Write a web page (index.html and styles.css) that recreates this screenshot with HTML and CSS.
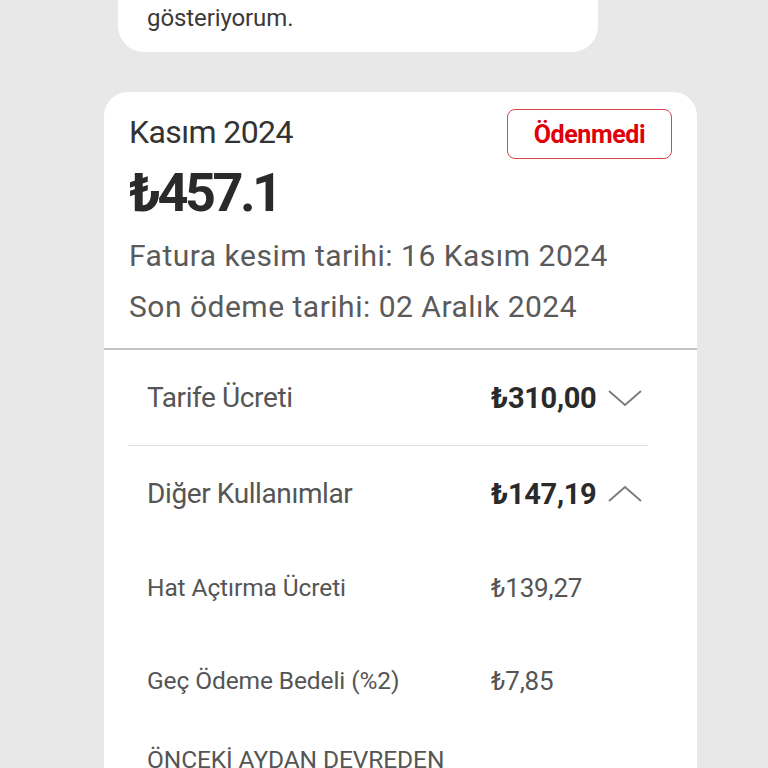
FILE: index.html
```html
<!DOCTYPE html>
<html lang="tr">
<head>
<meta charset="utf-8">
<link rel="stylesheet" href="styles.css">
</head>
<body>
<div class="page">
  <div class="msg-card">
    <p class="msg-text">gösteriyorum.</p>
  </div>

  <div class="bill-card">
    <div class="bill-head">
      <div class="head-top">
        <div class="head-left">
          <div class="month">Kasım 2024</div>
          <div class="total">₺457.1</div>
        </div>
        <div class="badge">Ödenmedi</div>
      </div>
      <div class="date-line first">Fatura kesim tarihi: 16 Kasım 2024</div>
      <div class="date-line second">Son ödeme tarihi: 02 Aralık 2024</div>
    </div>

    <div class="items">
      <div class="row main-row bordered">
        <span class="label">Tarife Ücreti</span>
        <span class="amount">₺310,00</span>
        <svg class="chev" viewBox="0 0 36 18" width="36" height="18"><path d="M2 2 L18 16 L34 2" fill="none" stroke="#7a7a7a" stroke-width="1.8"/></svg>
      </div>
      <div class="row main-row">
        <span class="label">Diğer Kullanımlar</span>
        <span class="amount">₺147,19</span>
        <svg class="chev" viewBox="0 0 36 18" width="36" height="18"><path d="M2 16 L18 2 L34 16" fill="none" stroke="#7a7a7a" stroke-width="1.8"/></svg>
      </div>
      <div class="row sub-row">
        <span class="label">Hat Açtırma Ücreti</span>
        <span class="sub-amount">₺139,27</span>
      </div>
      <div class="row sub-row">
        <span class="label">Geç Ödeme Bedeli (%2)</span>
        <span class="sub-amount">₺7,85</span>
      </div>
      <div class="row sub-row top-row">
        <span class="label">ÖNCEKİ AYDAN DEVREDEN</span>
      </div>
    </div>
  </div>
</div>
</body>
</html>
```

FILE: styles.css
```css
html, body {
  margin: 0;
  padding: 0;
  background: #e8e8e8;
  font-family: Roboto, "Noto Sans", sans-serif;
  overflow: hidden;
  height: 768px;
}

.page {
  width: 768px;
  height: 768px;
  overflow: hidden;
}

.msg-card {
  margin: -60px 0 0 118px;
  width: 480px;
  height: 112px;
  background: #ffffff;
  border-radius: 26px;
  box-sizing: border-box;
  padding: 0 0 0 29px;
  display: flex;
  align-items: flex-end;
}

.msg-text {
  margin: 0 0 20px 0;
  font-size: 24px;
  color: #3a3a3a;
  line-height: 28px;
  letter-spacing: -0.1px;
}

.bill-card {
  margin: 40px 0 0 104px;
  width: 593px;
  height: 800px;
  background: #ffffff;
  border-radius: 24px 24px 0 0;
}

.bill-head {
  padding: 20px 25px 17px 25px;
  border-bottom: 2px solid #c4c4c4;
}

.head-top {
  display: flex;
  justify-content: space-between;
  align-items: flex-start;
}

.month {
  font-size: 32px;
  line-height: 40px;
  color: #333333;
  letter-spacing: -0.6px;
}

.total {
  margin-top: 12px;
  font-size: 54px;
  font-weight: 700;
  line-height: 58px;
  color: #2a2a2a;
  letter-spacing: -3.5px;
}

.badge {
  margin-top: -3px;
  width: 165px;
  height: 50px;
  box-sizing: border-box;
  border: 1.5px solid #d4464b;
  border-radius: 8px;
  color: #e0000a;
  font-size: 25px;
  font-weight: 700;
  display: flex;
  align-items: center;
  justify-content: center;
  letter-spacing: -0.4px;
}

.date-line {
  font-size: 30px;
  line-height: 48px;
  color: #5a5a5a;
  letter-spacing: 0.5px;
}

.date-line.first {
  margin-top: 10px;
}

.date-line.second {
  margin-top: 3px;
}

.items {
  margin: 0 49px 0 24px;
}

.row {
  display: flex;
  align-items: center;
  padding-left: 19px;
}

.main-row {
  height: 95px;
}

.bordered {
  border-bottom: 1.5px solid #dedede;
}

.main-row .label {
  width: 344px;
  font-size: 28px;
  color: #555555;
  letter-spacing: -0.4px;
}

.amount {
  font-size: 29px;
  font-weight: 700;
  color: #2a2a2a;
  letter-spacing: -0.3px;
  width: 107px;
}

.chev {
  margin-left: 9px;
}

.sub-row {
  height: 93px;
}

.sub-row .label {
  width: 344px;
  font-size: 24.5px;
  color: #555555;
  letter-spacing: -0.1px;
}

.sub-amount {
  font-size: 26px;
  color: #555555;
  letter-spacing: -0.2px;
}

.top-row {
  align-items: flex-start;
  padding-top: 18px;
  box-sizing: border-box;
}
```
